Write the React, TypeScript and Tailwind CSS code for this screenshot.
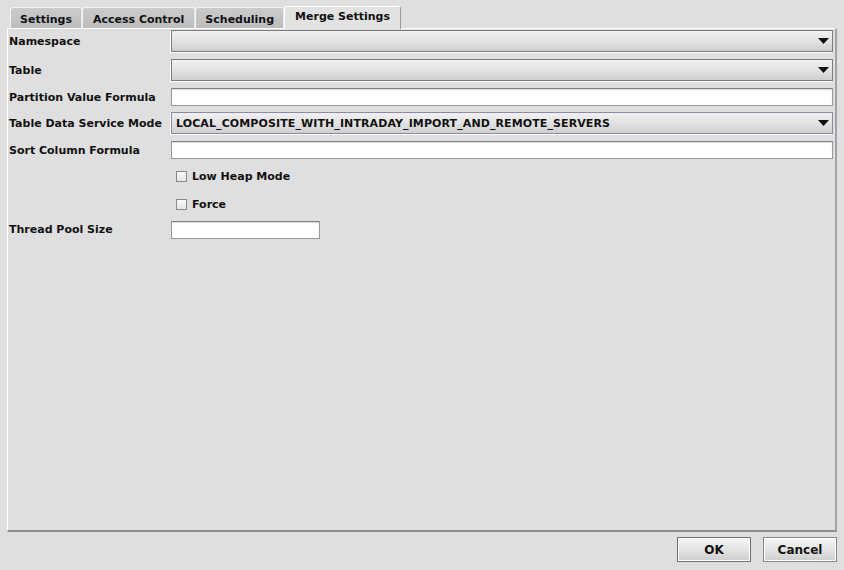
import React from "react";

const font = { fontFamily: '"DejaVu Sans", "Liberation Sans", sans-serif' };

function Arrow() {
  return (
    <svg width="11" height="7" viewBox="0 0 11 7" className="shrink-0">
      <polygon points="0,0 11,0 5.5,6" fill="#111" />
    </svg>
  );
}

function Combo({ text, focused }: { text?: string; focused?: boolean }) {
  return (
    <div
      className={`flex-1 h-[22px] flex items-center justify-between pl-[4px] pr-[3px] border ${
        focused ? "border-[#8c8aa6]" : "border-[#7d7d7d]"
      } bg-[linear-gradient(#f0f0f0,#e3e3e3_50%,#cfcfcf)] shadow-[-1px_1px_0_#ffffff]`}
    >
      <span className="text-[11px] font-bold text-[#111] tracking-[0.1px] leading-none">{text}</span>
      <Arrow />
    </div>
  );
}

function Field({ w }: { w?: string }) {
  return (
    <div
      className={`${w ?? "flex-1"} h-[18px] bg-white border border-[#999999] border-t-[#808080] shadow-[inset_0_1px_1px_#d8d8d8]`}
    />
  );
}

function Label({ children }: { children?: React.ReactNode }) {
  return (
    <div className="w-[163px] shrink-0 text-[11px] font-bold text-[#111] leading-none pl-[1px]">
      {children}
    </div>
  );
}

function Check({ label }: { label: string }) {
  return (
    <div className="flex items-center pl-[5px] gap-[5px]">
      <div className="w-[11px] h-[11px] border border-[#8a8a8a] bg-[linear-gradient(#fafafa,#e6e6e6)]" />
      <span className="text-[11px] font-bold text-[#111] leading-none">{label}</span>
    </div>
  );
}

function Tab({ label, selected, px }: { label: string; selected?: boolean; px?: string }) {
  if (selected) {
    return (
      <div className="h-[23px] px-[10px] flex items-center justify-center bg-[#e2e2e2] border-t border-l border-white border-r border-r-[#9a9a9a] rounded-t-[3px] -mb-px relative z-10 mt-[-1px]">
        <span className="text-[11px] font-bold text-[#111] leading-none -mt-[3px]">{label}</span>
      </div>
    );
  }
  return (
    <div
      className={`h-[21px] ${px ?? "px-[9px]"} flex items-center justify-center bg-[linear-gradient(#cbcbcb,#bdbdbd)] border-t border-l border-r border-[#f4f4f4] border-r-[#e8e8e8] rounded-t-[3px] mt-[1px]`}
    >
      <span className="text-[11px] font-bold text-[#111] leading-none mt-[2px]">{label}</span>
    </div>
  );
}

function Button({ label, def }: { label: string; def?: boolean }) {
  return (
    <div
      className={`w-[74px] h-[25px] flex items-center justify-center border ${
        def ? "border-[#6f6f6f]" : "border-[#8a8a8a]"
      } bg-[linear-gradient(#f6f6f6,#e4e4e4_50%,#cdcdcd)] shadow-[inset_0_0_0_1px_#ffffff]`}
    >
      <span className="text-[12px] font-bold text-[#111] leading-none">{label}</span>
    </div>
  );
}

export default function App() {
  return (
    <div className="w-[844px] h-[570px] bg-[#dfdfdf] flex flex-col overflow-hidden" style={font}>
      <div className="flex items-end pl-[10px] pt-[6px] h-[28px]">
        <Tab label="Settings" />
        <Tab label="Access Control" px="px-[10px]" />
        <Tab label="Scheduling" />
        <Tab label="Merge Settings" selected />
      </div>
      <div className="ml-[7px] mr-[7px] h-[504px] border-l border-t border-white border-b-2 border-b-[#8e8e8e] border-r-2 border-r-[#a3a3a3] flex flex-col pt-[1px] pr-[2px]">
        <div className="flex items-center h-[22px] mt-[0px]">
          <Label>Namespace</Label>
          <Combo />
        </div>
        <div className="flex items-center h-[22px] mt-[7px]">
          <Label>Table</Label>
          <Combo />
        </div>
        <div className="flex items-center h-[18px] mt-[7px]">
          <Label>Partition Value Formula</Label>
          <Field />
        </div>
        <div className="flex items-center h-[22px] mt-[6px]">
          <Label>Table Data Service Mode</Label>
          <Combo text="LOCAL_COMPOSITE_WITH_INTRADAY_IMPORT_AND_REMOTE_SERVERS" focused />
        </div>
        <div className="flex items-center h-[18px] mt-[7px]">
          <Label>Sort Column Formula</Label>
          <Field />
        </div>
        <div className="flex items-center h-[20px] mt-[7px]">
          <Label />
          <Check label="Low Heap Mode" />
        </div>
        <div className="flex items-center h-[20px] mt-[8px]">
          <Label />
          <Check label="Force" />
        </div>
        <div className="flex items-center h-[19px] mt-[6px]">
          <Label>Thread Pool Size</Label>
          <Field w="w-[149px]" />
        </div>
      </div>
      <div className="flex justify-end gap-[12px] pr-[7px] pt-[5px]">
        <Button label="OK" def />
        <Button label="Cancel" />
      </div>
    </div>
  );
}
